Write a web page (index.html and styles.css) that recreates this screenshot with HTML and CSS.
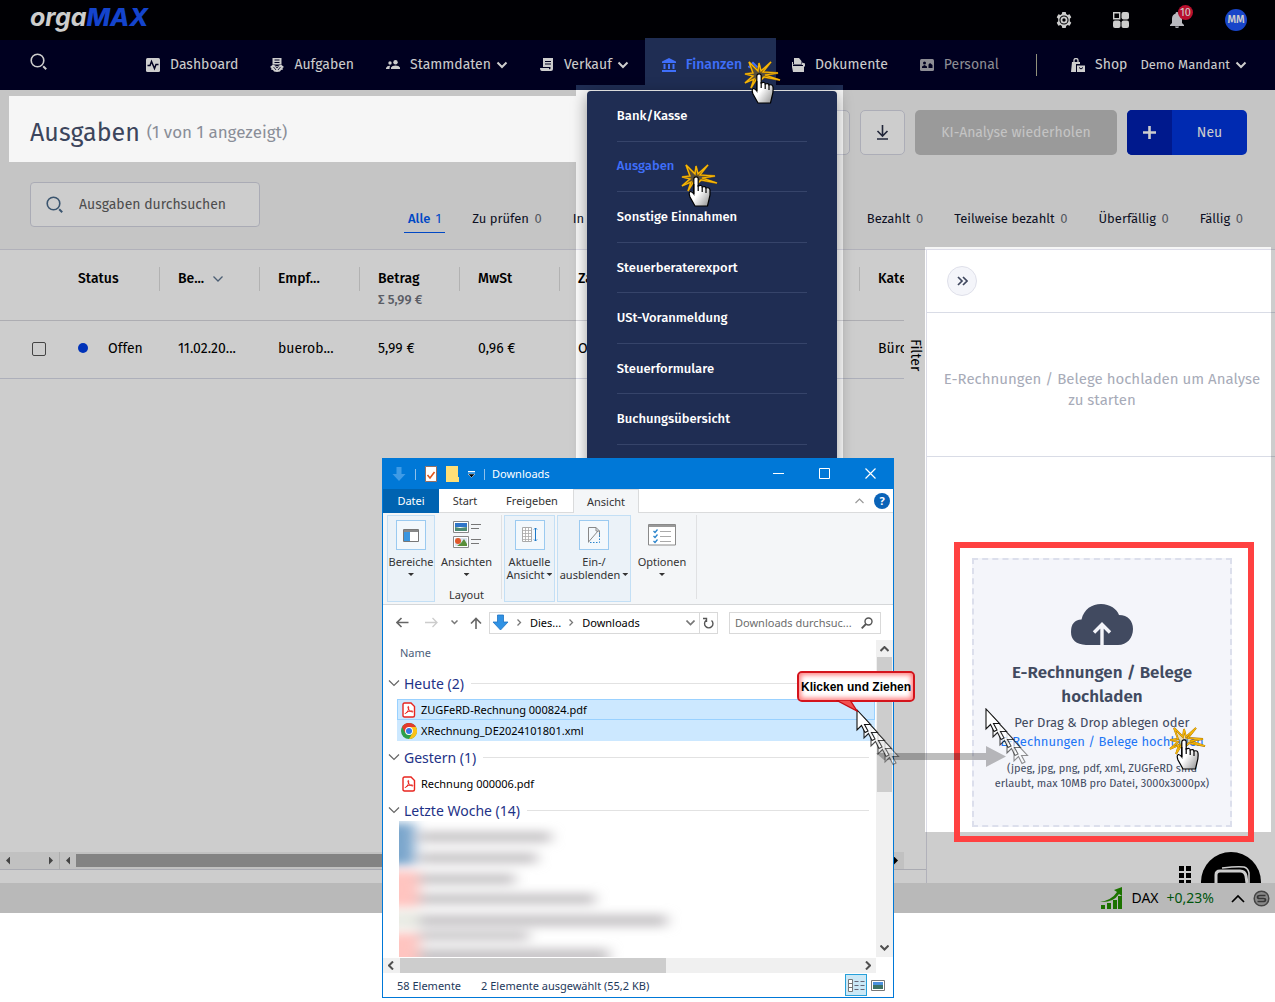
FILE: index.html
```html
<!DOCTYPE html>
<html lang="de">
<head>
<meta charset="utf-8">
<title>orgaMAX – Ausgaben</title>
<link rel="stylesheet" href="styles.css">
</head>
<body>
<svg class="defs" aria-hidden="true">
  <defs>
    <symbol id="chev" viewBox="0 0 12 8"><path d="M1.500 1.500 6 6l4.500-4.500" fill="none" stroke="currentColor" stroke-width="2"/></symbol>
    <symbol id="chev-thin" viewBox="0 0 12 8"><path d="M1 1.500 6 6.500l5-5" fill="none" stroke="currentColor" stroke-width="1.200"/></symbol>
    <symbol id="search" viewBox="0 0 18 18"><circle cx="7.500" cy="7.500" r="6.300" fill="none" stroke="currentColor" stroke-width="1.600"/><path d="m13.200 13.200 3 3" stroke="currentColor" stroke-width="2"/></symbol>
    <symbol id="pdf" viewBox="0 0 14 16"><path d="M2.500 1h6.500l3.500 3.500V13.500q0 1.500-1.500 1.500H2.500Q1 15 1 13.500v-11Q1 1 2.500 1z" fill="#fff" stroke="#e8251f" stroke-width="1.400"/><path d="M3.500 11.500C5.500 10.500 7 7.500 6.700 5c-.1-.9-1-.7-.8.3.4 2.200 2 4.300 4.500 4.700.9 0 .7-1.200-.6-1.100-2.300.1-4 .7-5.800 1.700-1 .7-.9 1.500-.5.9z" fill="none" stroke="#e8251f"/></symbol>
    <symbol id="dlarrow" viewBox="0 0 16 17"><path d="M5 1h6v7h4.500L8 16 .5 8H5z" fill="#3092e4" stroke="#1e74c4" stroke-width=".8"/></symbol>
    <symbol id="pointer" viewBox="0 0 16 25"><path d="M1 1v20l4.500-4.500 3.500 7 3-1.500-3.500-6.500h6z" fill="#fff" stroke="#111" stroke-width="1.100"/></symbol>
    <linearGradient id="skin" x2="1" y2="1"><stop offset=".5" stop-color="#fff"/><stop offset="1" stop-color="#8c8c8c"/></linearGradient>
    <symbol id="click" viewBox="-16 -16 40 48"><path d="M-10-12-1-3 0-11 2-3l10-9L4-2l15 1L6 1l15 5L5 3l-3 3-4-2-6 10 3-9-9 4 8-7-8-2 8-1z" fill="#d8a010" fill-opacity=".3" stroke="#a06c00" stroke-width="1.800"/><path d="M-10-12-1-3 0-11 2-3l10-9L4-2l15 1L6 1l15 5L5 3l-3 3-4-2-6 10 3-9-9 4 8-7-8-2 8-1z" fill="none" stroke="#f5b70a" stroke-width="1.200"/><path d="M-2.200 2a2.200 2.200 0 0 1 4.400 0v7q3.500-1.500 4 1 3-1.200 3.800 1 3.600-1 4 2 .5 5-1 9.500L11.500 29H-1L-6 20q-1.800-5 .5-5.500Q-3.500 15-2.200 17z" fill="url(#skin)" stroke="#000" stroke-width="1.200"/><path d="M-2.200 7v10M2.200 8v6M6.200 10v5M10 11v5" fill="none" stroke="#000" stroke-width="1.200"/></symbol>
  </defs>
</svg>

<div class="app">
  <header class="topbar">
    <a class="logo" href="#">orga<span>MAX</span></a>
    <div class="top-actions">
      <button class="icon-btn" aria-label="Einstellungen"><svg width="16" height="16" viewBox="0 0 16 16"><path fill="currentColor" fill-rule="evenodd" d="M6.300 0h3.400l.5 2.100 1.300.8 2.100-.7 1.700 3L13.800 6.700v2.600l1.500 1.500-1.700 3-2.100-.7-1.300.8-.5 2.100H6.300l-.5-2.100-1.300-.8-2.100.7-1.700-3 1.500-1.500V6.700L.7 5.200l1.700-3 2.100.7 1.300-.8zM8 3.400a4.600 4.600 0 1 0 0 9.200 4.600 4.600 0 0 0 0-9.200z"/><circle cx="8" cy="8" r="2.600" fill="none" stroke="currentColor" stroke-width="1.800"/></svg></button>
      <button class="icon-btn" aria-label="Apps"><svg width="16" height="16" viewBox="0 0 16 16" fill="currentColor"><path d="M.7.700h6v6h-6z" fill="none" stroke="currentColor" stroke-width="1.400"/><rect x="8.500" width="7.500" height="7.500" rx="2"/><rect y="8.500" width="7.500" height="7.500" rx="2"/><rect x="8.500" y="8.500" width="7.500" height="7.500" rx="2"/></svg></button>
      <button class="icon-btn bell" aria-label="Benachrichtigungen"><svg width="14" height="16" viewBox="0 0 14 16" fill="currentColor"><path d="M7 0a1.300 1.300 0 0 1 1.300 1.500C10.500 2 12 4 12 6.500V11l2 2v1H0v-1l2-2V6.500C2 4 3.500 2 5.700 1.500A1.300 1.300 0 0 1 7 0zM5 14.500h4a2 1.500 0 0 1-4 0z"/></svg><span class="badge">10</span></button>
      <button class="avatar">MM</button>
    </div>
  </header>

  <nav class="nav">
    <button class="icon-btn nav-search" aria-label="Suche"><svg width="18" height="18"><use href="#search"/></svg></button>
    <a class="nav-item" href="#"><svg width="14" height="14" viewBox="0 0 14 14"><rect width="14" height="14" rx="1.500" fill="currentColor"/><path d="M1.500 7.500H4L5.500 3.500l3 7L10 6.500h2.500" fill="none" stroke="#000028" stroke-width="1.500"/></svg>Dashboard</a>
    <a class="nav-item" href="#"><svg width="14" height="14" viewBox="0 0 14 14" fill="currentColor"><path d="M2.500 0h9v6.500h-9z"/><path d="M4.500 2h5M4.500 4.500h5" stroke="#000028" fill="none"/><path d="M0 9l3-2.500L7 8.500l4-2L14 9l-1.500 1 .5 1.500-2 .5-1 1.500L7 14l-3-.5L3 12l-2-.5.500-1.500z"/><path d="M3.500 9l2.500 3M10.500 9 8 12M5.500 8.500 7 10l1.500-1.500" stroke="#000028" stroke-width=".8" fill="none"/></svg>Aufgaben</a>
    <a class="nav-item" href="#"><svg width="14" height="10" viewBox="0 0 14 10" fill="currentColor"><circle cx="4" cy="3" r="1.700"/><circle cx="9.500" cy="2.300" r="2.200"/><path d="M0 9V8q1-2.500 4.200-2.300Q3.500 6.500 3.500 9zM5 9V7.500Q6 5.500 9.500 5.500T14 7.500V9z"/></svg>Stammdaten<svg width="12" height="8"><use href="#chev"/></svg></a>
    <a class="nav-item" href="#"><svg width="14" height="14" viewBox="0 0 14 14" fill="currentColor"><path d="M3 0h10v11q0 2-2 2H2Q0 13 0 10h9v1q1.500 1 1.500-1V9H3z"/><path d="M5 3.500h6M5 6h6" stroke="#000028"/></svg>Verkauf<svg width="12" height="8"><use href="#chev"/></svg></a>
    <div class="nav-group">
      <a class="nav-item active" href="#"><svg width="14" height="14" viewBox="0 0 14 14" fill="currentColor"><path d="M7 0l7 3.500V5H0V3.500zM1.500 6h2v5h-2zM6 6h2v5H6zM10.500 6h2v5h-2zM0 12h14v2H0z"/></svg>Finanzen<svg class="flip" width="12" height="8"><use href="#chev"/></svg></a>
      <div class="submenu-area">
        <div class="submenu">
          <ul>
            <li><a href="#">Bank/Kasse</a></li>
            <li><a class="current" href="#">Ausgaben</a></li>
            <li><a href="#">Sonstige Einnahmen</a></li>
            <li><a href="#">Steuerberaterexport</a></li>
            <li><a href="#">USt-Voranmeldung</a></li>
            <li><a href="#">Steuerformulare</a></li>
            <li><a href="#">Buchungsübersicht</a></li>
          </ul>
        </div>
      </div>
    </div>
    <a class="nav-item" href="#"><svg width="13" height="14" viewBox="0 0 13 14" fill="currentColor"><path d="M2 0h5l2.500 3v3H2zM0 4h1v2.500h9V4.500l3 1V8l-1 1v5H1L0 9z"/><path d="M1 7.500h10" stroke="#000028"/></svg>Dokumente</a>
    <a class="nav-item muted" href="#"><svg width="14" height="12" viewBox="0 0 14 12"><rect width="14" height="12" rx="1.500" fill="currentColor"/><path d="M2 9V7.500L4.500 6 7 7.500V9zM8.500 9V5.500L10 4l2.500 2V9z" fill="#000028"/><circle cx="4.500" cy="4" r="1.500" fill="#000028"/></svg>Personal</a>
    <span class="divider"></span>
    <a class="nav-item shop" href="#"><svg width="14" height="14" viewBox="0 0 14 14" fill="currentColor"><path d="M3 4V2.500q0-2 2-2t2 2V4" fill="none" stroke="currentColor" stroke-width="1.300"/><path d="M1 4h8v2H5v8H0zM6 7.500h8V14H6z"/><path d="M8 9.500q2 3 4 0" fill="none" stroke="#000028"/></svg>Shop</a>
    <button class="tenant">Demo Mandant<svg width="12" height="8"><use href="#chev"/></svg></button>
  </nav>

  <section class="page-head">
    <div class="title-row">
      <h1>Ausgaben</h1><span class="count">(1 von 1 angezeigt)</span>
      <div class="actions">
        <button class="square" aria-label="Ansicht"></button>
        <button class="square" aria-label="Herunterladen"><svg width="13" height="15" viewBox="0 0 13 15"><path d="M6.500 0v11M1.500 6l5 5 5-5M1 14h11" fill="none" stroke="#2a3048" stroke-width="1.600"/></svg></button>
        <button class="ki" disabled>KI-Analyse wiederholen</button>
        <button class="new"><span class="plus"><svg width="13" height="13" viewBox="0 0 13 13"><path d="M6.500 0v13M0 6.500h13" stroke="#fff" stroke-width="2.600"/></svg></span><span>Neu</span></button>
      </div>
    </div>
    <div class="filter-row">
      <label class="search"><svg width="18" height="18"><use href="#search"/></svg><input type="text" placeholder="Ausgaben durchsuchen" aria-label="Ausgaben durchsuchen"></label>
      <div class="tabs">
        <a class="on" href="#">Alle <span>1</span></a>
        <a href="#">Zu prüfen <span>0</span></a>
        <a class="fill" href="#">In</a>
        <a href="#">Bezahlt <span>0</span></a>
        <a href="#">Teilweise bezahlt <span>0</span></a>
        <a href="#">Überfällig <span>0</span></a>
        <a href="#">Fällig <span>0</span></a>
      </div>
    </div>
  </section>

  <main class="main">
    <div class="left">
      <div class="table-area">
        <div class="table-clip">
          <table>
            <colgroup><col class="c-check"><col><col><col><col><col><col><col><col><col></colgroup>
            <thead><tr>
              <th class="no-sep"></th><th>Status</th>
              <th>Be...<svg class="sort" width="12" height="8" viewBox="0 0 12 8"><path d="M1.500 1.500 6 6l4.500-4.500" fill="none" stroke="#5e7590" stroke-width="1.300"/></svg></th>
              <th>Empf...</th><th>Betrag<small>Σ 5,99 €</small></th><th>MwSt</th><th>Zahl...</th><th></th><th></th><th>Kategorie</th>
            </tr></thead>
            <tbody><tr>
              <td class="check"><input type="checkbox" aria-label="Zeile auswählen"></td>
              <td><span class="dot"></span>Offen</td><td>11.02.20...</td><td>buerob...</td><td>5,99 €</td><td>0,96 €</td><td>Offen</td><td></td><td></td><td>Büro</td>
            </tr></tbody>
          </table>
        </div>
        <button class="filter-tab">Filter</button>
      </div>
      <div class="scrollers">
        <div class="sc sc-a"><i class="l"></i><i class="r"></i></div>
        <div class="sc sc-b"><i class="l"></i><b></b><i class="r dark"></i></div>
      </div>
    </div>

    <aside class="panel">
      <div class="panel-head"><button class="collapse" aria-label="Einklappen"><svg width="11" height="10" viewBox="0 0 11 10"><path d="m1 1 4 4-4 4M6 1l4 4-4 4" fill="none" stroke="#3f475e" stroke-width="1.700"/></svg></button></div>
      <p class="panel-note">E-Rechnungen / Belege hochladen um Analyse zu starten</p>
      <div class="drop">
        <svg width="62" height="42" viewBox="0 0 62 42"><path d="M15 41Q0 40 0 28 0 16 10.500 15.500C13 5 21 0 30 0c9 0 16 5 18 11 9 0 14 6 14 14 0 9-6 16-15 16z" fill="#414a60"/><path d="M31 41V21M23 28.500l8-8 8 8" fill="none" stroke="#f4f5fa" stroke-width="3.400"/></svg>
        <h2>E-Rechnungen / Belege hochladen</h2>
        <p class="hint">Per Drag &amp; Drop ablegen oder<br><a href="#">E-Rechnungen / Belege hochladen</a></p>
        <p class="types">(jpeg, jpg, png, pdf, xml, ZUGFeRD sind erlaubt, max 10MB pro Datei, 3000x3000px)</p>
        <span class="frame"></span>
      </div>
      <div class="chat">
        <svg width="84" height="31" viewBox="0 0 84 31"><g fill="#000"><path d="M1 14h5v5H1zM8 14h5v5H8zM1 21h5v5H1zM8 21h5v5H8zM1 28h5v3H1zM8 28h5v3H8z"/><circle cx="53" cy="30" r="30"/></g><path d="M38 31v-8q0-4 4-4h20q5 0 6 5l1 7" fill="none" stroke="#fff" stroke-width="3"/><path d="M44 16q16-2 22-1 4 1 5 6v10" fill="none" stroke="#fff" stroke-width="1.500"/></svg>
      </div>
    </aside>
  </main>

  <footer class="taskbar">
    <svg width="23" height="22" viewBox="0 0 23 22" fill="#249000"><path d="M1 18h4v4H1zM7 16h4v6H7zM13 13h4v9h-4zM18 9h4v13h-4z"/><path d="M0 15Q12 13 17 5l-3-2 8-3v9l-3-2Q13 16 0 15z"/></svg>
    <span>DAX</span><span class="up">+0,23%</span>
    <svg class="tray" width="14" height="9" viewBox="0 0 14 9"><path d="m1 8 6-6 6 6" fill="none" stroke="#000" stroke-width="1.700"/></svg>
    <svg width="17" height="17" viewBox="0 0 17 17"><circle cx="8.500" cy="8.500" r="7.300" fill="#aaa" stroke="#555" stroke-width="1.500"/><path d="M12.500 5.500H7q-2.500 0-2.500 1.500t2 1.500h4q2 0 2 1.500T10 11.500H4.500" fill="none" stroke="#444" stroke-width="1.700"/></svg>
  </footer>
  <div class="dim"></div>
</div>

<section class="window" aria-label="Downloads">
  <div class="w-title">
    <svg width="14" height="16" viewBox="0 0 14 16"><path d="M4.500 1h5v7h4L7 15 .5 8h4z" fill="#3f9be6"/></svg><span class="pipe"></span>
    <svg width="12" height="16" viewBox="0 0 12 16"><path d="M.5.500h11v15H.5z" fill="#fff" stroke="#9a7060"/><path d="m2.500 9 2.500 3L9.500 6" fill="none" stroke="#e0541a" stroke-width="1.600"/></svg>
    <svg width="13" height="16" viewBox="0 0 13 16"><path d="M0 0h12v11h1v5H0z" fill="#ffdf76"/></svg>
    <svg class="qa" width="7" height="7" viewBox="0 0 7 7"><path d="M0 0h7v1.300H0z" fill="#fff"/><path d="M0 3h7L3.500 6.500z" fill="#000" stroke="#fff" stroke-width=".5"/></svg><span class="pipe"></span>
    <span class="w-name">Downloads</span>
    <button aria-label="Minimieren"><svg width="11" height="11" viewBox="0 0 11 11"><path d="M0 5.500h11" stroke="#fff"/></svg></button>
    <button aria-label="Maximieren"><svg width="11" height="11" viewBox="0 0 11 11"><path d="M.5.500h10v10H.5z" fill="none" stroke="#fff"/></svg></button>
    <button aria-label="Schließen"><svg width="11" height="11" viewBox="0 0 11 11"><path d="m.5.500 10 10m0-10-10 10" stroke="#fff" stroke-width="1.200"/></svg></button>
  </div>
  <div class="w-tabs">
    <button class="file-tab">Datei</button><button>Start</button><button class="wide">Freigeben</button><button class="sel">Ansicht</button>
    <svg class="up-arrow" width="9" height="6" viewBox="0 0 9 6"><path d="m.5 5 4-4 4 4" fill="none" stroke="#999" stroke-width="1.200"/></svg>
    <span class="help">?</span>
  </div>
  <div class="ribbon">
    <button class="rb lit r1"><span class="ic"><svg width="16" height="13" viewBox="0 0 16 13"><path d="M.5.500h15v12H.5z" fill="#fff" stroke="#777"/><path d="M1 1h14v2H1z" fill="#888"/><path d="M1 3h6v9H1z" fill="#3a96e0"/></svg></span>Bereiche<i></i></button>
    <div class="r2"><button class="rb"><span class="ic plain"><svg width="28" height="28" viewBox="0 0 28 28"><path d="M.5.500h15v11H.5zM.5 15.500h15v11H.5z" fill="#fff" stroke="#888"/><path d="M2 2h12v4H2z" fill="#2f75c8"/><path d="M2 6l5 1 7-1v4H2z" fill="#4f8a72"/><path d="M2 17h12v8H2z" fill="#dbe3f0"/><circle cx="5" cy="20" r="3" fill="#e0592a"/><path d="m8 22 3-4 3 5v2H4z" fill="#5a8f3a"/><path d="M18 3.500h10M18 7.500h8M18 18.500h10M18 22.500h8" stroke="#777"/></svg></span>Ansichten<i></i></button><span class="cap">Layout</span></div>
    <span class="rsep"></span>
    <button class="rb lit r3"><span class="ic"><svg width="16" height="16" viewBox="0 0 16 16"><path d="M.5.500h9v14h-9z" fill="#fff" stroke="#aaa"/><path d="M1 3.500h8M1 6.500h8M1 9.500h8M1 12.500h8M3.500 1v13M6.500 1v13" stroke="#aaa" stroke-width=".8"/><path d="M13.500 1v13M12 2.500 13.500 1 15 2.500M12 12.500l1.500 1.500 1.500-1.500" fill="none" stroke="#1b78c8"/></svg></span>Aktuelle<span class="ln">Ansicht<i></i></span></button>
    <button class="rb lit r4"><span class="ic"><svg width="12" height="16" viewBox="0 0 12 16"><path d="M.5.500H8L11.500 4v6" fill="none" stroke="#888"/><path d="M.5 15.500V.5M.5 15 10 4M8 .5V4h3.500" fill="none" stroke="#888"/><path d="M2 15.500h9.500V6" fill="none" stroke="#2a84cc" stroke-dasharray="1.500 1.500"/></svg></span>Ein-/<span class="ln">ausblenden<i></i></span></button>
    <button class="rb r5"><span class="ic plain"><svg width="28" height="22" viewBox="0 0 28 22"><path d="M.5.500h27v20.500H.5z" fill="#fff" stroke="#8a8a8a"/><path d="M1 1h26v2H1z" fill="#999"/><path d="M12 7.500h11M12 12.500h11M12 17.500h11" stroke="#aaa"/><path d="m5.500 7 1.500 1.500L9.500 5.500m-4 6.500L7 13.500l2.500-3m-4 6.500L7 18.500l2.500-3" fill="none" stroke="#2a84cc" stroke-width="1.300"/></svg></span>Optionen<i></i></button>
    <span class="rsep"></span>
  </div>
  <div class="address">
    <svg width="13" height="11" viewBox="0 0 13 11"><path d="M12.500 5.500H1M5.500 1 1 5.500 5.500 10" fill="none" stroke="#666" stroke-width="1.600"/></svg>
    <svg width="13" height="11" viewBox="0 0 13 11"><path d="M0 5.500h11.500M7.500 1 12 5.500 7.500 10" fill="none" stroke="#ccc" stroke-width="1.300"/></svg>
    <svg width="7" height="5" viewBox="0 0 7 5"><path d="m.5.500 3 3 3-3" fill="none" stroke="#777" stroke-width="1.500"/></svg>
    <svg width="12" height="12" viewBox="0 0 12 12"><path d="M6 12V1.500M1 6.500l5-5 5 5" fill="none" stroke="#666" stroke-width="1.600"/></svg>
    <div class="path"><svg width="17" height="17"><use href="#dlarrow"/></svg><svg width="5" height="7" viewBox="0 0 5 7"><path d="m.5.500 3 3-3 3" fill="none" stroke="#777" stroke-width="1.300"/></svg><span>Dies...</span><svg width="5" height="7" viewBox="0 0 5 7"><path d="m.5.500 3 3-3 3" fill="none" stroke="#777" stroke-width="1.300"/></svg><span>Downloads</span><svg class="pd" width="9" height="6" viewBox="0 0 9 6"><path d="m.5.500 4 4 4-4" fill="none" stroke="#777" stroke-width="1.600"/></svg><button aria-label="Aktualisieren"><svg width="11" height="12" viewBox="0 0 11 12"><path d="M8.500 3.500A4.200 4.200 0 1 1 3 3.500M0 1.500h3.500V5" fill="none" stroke="#555" stroke-width="1.400"/></svg></button></div>
    <label class="w-search"><input type="text" placeholder="Downloads durchsuc..." aria-label="Downloads durchsuchen"><svg width="12" height="12" viewBox="0 0 12 12"><circle cx="7.500" cy="4.500" r="3.500" fill="none" stroke="#555" stroke-width="1.400"/><path d="M5 7 .7 11.300" stroke="#555" stroke-width="1.800"/></svg></label>
  </div>
  <div class="w-body">
    <div class="list">
      <div class="col-name">Name</div>
      <div class="group"><svg width="12" height="8"><use href="#chev-thin"/></svg>Heute (2)</div>
      <div class="file sel focus"><svg width="14" height="16"><use href="#pdf"/></svg>ZUGFeRD-Rechnung 000824.pdf</div>
      <div class="file sel"><svg width="16" height="16" viewBox="0 0 16 16"><circle cx="8" cy="8" r="8" fill="#2da04a"/><path d="M1 4a8 8 0 0 1 14 0z" fill="#e33b2e"/><path d="M1 4 4.500 10 8 8 8 4z" fill="#e33b2e"/><path d="M15 4H8l3.500 6L8 16A8 8 0 0 0 15 4z" fill="#fbc116"/><circle cx="8" cy="8" r="3.900" fill="#fff"/><circle cx="8" cy="8" r="3" fill="#3377e8"/></svg>XRechnung_DE2024101801.xml</div>
      <div class="group"><svg width="12" height="8"><use href="#chev-thin"/></svg>Gestern (1)</div>
      <div class="file"><svg width="14" height="16"><use href="#pdf"/></svg>Rechnung 000006.pdf</div>
      <div class="group"><svg width="12" height="8"><use href="#chev-thin"/></svg>Letzte Woche (14)</div>
      <div class="blurred"><svg width="478" height="136" viewBox="0 0 478 136"><defs><filter id="soft" x="-20%" y="-20%" width="140%" height="140%"><feGaussianBlur stdDeviation="7 5"/></filter></defs><g filter="url(#soft)"><path d="M-14 2h30v42h-30z" fill="#7aa6cc"/><path d="M-14 50h34v36h-34zM-14 112h34v34h-34z" fill="#ffc4c0"/><path d="M-14 90h34v18h-34z" fill="#e9ebe4"/><path d="M20 10h132v12H20zM20 31h118v12H20zM20 52h96v12H20zM20 72h176v12H20zM20 93h248v13H20zM20 110h110v10H20zM20 127h190v20H20z" fill="#cac8ca"/></g></svg></div>
    </div>
    <div class="vscroll"><svg width="9" height="6" viewBox="0 0 9 6"><path d="m.5 5 4-4 4 4" fill="none" stroke="#505050" stroke-width="2"/></svg><b></b><svg width="9" height="6" viewBox="0 0 9 6"><path d="m.5.500 4 4 4-4" fill="none" stroke="#505050" stroke-width="2"/></svg></div>
  </div>
  <div class="hscroll"><svg width="6" height="9" viewBox="0 0 6 9"><path d="m5 .5-4 4 4 4" fill="none" stroke="#505050" stroke-width="2"/></svg><b></b><svg width="6" height="9" viewBox="0 0 6 9"><path d="m1 .5 4 4-4 4" fill="none" stroke="#505050" stroke-width="2"/></svg></div>
  <div class="status"><span>58 Elemente</span><span>2 Elemente ausgewählt (55,2 KB)</span>
    <button class="view on" aria-label="Details"><svg width="17" height="13" viewBox="0 0 17 13"><path d="M.5.500h4v12h-4zM.5 4.500h4M.5 8.500h4" fill="#fff" stroke="#777"/><path d="M6.500 2.500h4M12.500 2.500h4M6.500 6.500h4M12.500 6.500h4M6.500 10.500h4M12.500 10.500h4" stroke="#667"/></svg></button>
    <button class="view" aria-label="Symbole"><svg width="14" height="11" viewBox="0 0 14 11"><path d="M.5.500h13v10H.5z" fill="#fff" stroke="#777"/><path d="M2 2h10v3H2z" fill="#4a90dd"/><path d="M2 5h10v4H2z" fill="#3d7265"/></svg></button>
  </div>
</section>

<div class="notes" aria-hidden="true">
  <svg class="n-arrow" width="130" height="22" viewBox="0 0 130 22"><path d="M0 7h110V0l20 10.500-20 10.500v-7H8z" fill="#000" fill-opacity=".26"/></svg>
  <svg class="trail from" width="46" height="60"><use href="#pointer" x="28" y="32" width="16" height="25" opacity=".45"/><use href="#pointer" x="21" y="24" width="16" height="25" opacity=".6"/><use href="#pointer" x="14" y="16" width="16" height="25" opacity=".75"/><use href="#pointer" x="7" y="8" width="16" height="25" opacity=".9"/><use href="#pointer" width="16" height="25"/></svg>
  <svg class="trail to" width="46" height="60"><use href="#pointer" x="28" y="32" width="16" height="25" opacity=".45"/><use href="#pointer" x="21" y="24" width="16" height="25" opacity=".6"/><use href="#pointer" x="14" y="16" width="16" height="25" opacity=".75"/><use href="#pointer" x="7" y="8" width="16" height="25" opacity=".9"/><use href="#pointer" width="16" height="25"/></svg>
  <div class="callout">Klicken und Ziehen<svg width="22" height="12" viewBox="0 0 22 12"><path d="M0 0 21 11 14 0z" fill="#f25050" stroke="#c80c14" stroke-width="1.300"/></svg></div>
  <svg class="click c1" width="40" height="48"><use href="#click"/></svg>
  <svg class="click c2" width="40" height="48"><use href="#click"/></svg>
  <svg class="click c3" width="40" height="48"><use href="#click"/></svg>
</div>
</body>
</html>
```

FILE: styles.css
```css
* { box-sizing: border-box; }
body { margin: 0; min-height: 100vh; position: relative; background: #fff; color: #000; font: 14px/20px "Fira Sans", "Noto Sans", sans-serif; }
button, input { font: inherit; color: inherit; }
button { border: 0; padding: 0; background: none; display: flex; align-items: center; justify-content: center; }
a { color: inherit; text-decoration: none; }
h1, h2, p, ul { margin: 0; padding: 0; font-weight: 400; }
svg { display: block; flex: none; }
.defs { position: absolute; width: 0; height: 0; }

/* application */
.app { position: relative; overflow: hidden; }
.dim {
  position: absolute; inset: 0; z-index: 2; pointer-events: none; background: rgba(0, 0, 0, .196);
  clip-path: polygon(evenodd, 0 0, 100% 0, 100% 100%, 0 100%, 0 0,
    9px 96px, 576px 96px, 576px 162px, 9px 162px, 9px 96px, 0 0,
    576px 85px, 843px 85px, 843px 490px, 576px 490px, 576px 85px, 0 0,
    calc(100% - 350px) 247px, calc(100% - 4px) 247px, calc(100% - 4px) 832px, calc(100% - 350px) 832px, calc(100% - 350px) 247px, 0 0);
}

.topbar { height: 40px; padding: 0 28px 0 30px; display: flex; justify-content: space-between; background: #000006; color: #fff; }
.logo { font: italic 700 25px/34px Inter, sans-serif; }
.logo span { color: #1955ff; font-weight: 800; }
.top-actions { display: flex; align-items: center; gap: 41px; }
.icon-btn { color: #fff; }
.bell { position: relative; color: #e6e6ee; }
.badge { position: absolute; left: 8px; top: -7px; width: 15px; height: 15px; border-radius: 50%; background: #e6143a; color: #fff; font-size: 11px; line-height: 15px; }
.avatar { width: 22px; height: 22px; border-radius: 50%; background: #1e56fa; color: #fff; font-size: 11px; font-weight: 500; }

.nav { height: 50px; padding: 0 28px 0 30px; display: flex; align-items: center; background: #000028; color: #fff; }
.nav-search { margin: 0 82px 6px 0; }
.nav-item { height: 50px; padding: 0 16px; display: flex; align-items: center; gap: 10px; white-space: nowrap; }
.nav-item svg + svg, .nav-item svg:last-child:not(:first-child) { margin-left: -5px; }
.nav-item.muted { color: #b0b0b8; }
.nav-group { position: relative; z-index: 3; }
.nav-item.active { height: 52px; margin-top: -2px; padding: 2px 17px 0; background: #1f2d53; color: #3f6ffa; font-weight: 500; }
.flip { transform: rotate(180deg); }
.divider { width: 1px; height: 22px; margin: 0 18px 0 auto; background: #b5b59a; }
.nav-item.shop { padding-right: 13px; }
.tenant { gap: 5px; font-size: 13px; white-space: nowrap; color: #fff; }

.submenu-area { position: absolute; left: -69px; top: 45px; width: 267px; padding: 1px 6px 0 11px; border-top: 5px solid #1f2d53; }
.submenu { padding: 0 30px 30px; border-radius: 4px; background: #1f2d53; box-shadow: 0 4px 16px rgba(0, 0, 0, .4); }
.submenu ul { height: 354px; display: flex; flex-direction: column; list-style: none; }
.submenu li { flex: 1; display: flex; align-items: center; border-bottom: 1px solid #36446a; font-size: 13px; font-weight: 500; color: #fff; }
.submenu .current { color: #3f6ffa; }

.page-head { padding: 20px 28px 16px 30px; background: #f6f6f6; border-bottom: 1px solid #dcdce8; }
.title-row { height: 45px; display: flex; align-items: center; }
h1 { font-size: 25px; line-height: 30px; color: #3c455c; }
.count { margin-left: 7px; font-size: 17px; color: #8a8e98; }
.actions { margin-left: auto; display: flex; gap: 10px; }
.actions button { height: 45px; border-radius: 5px; }
.square { width: 45px; background: #fff; border: 1px solid #d6d7e4; }
.ki { width: 202px; background: #c0c0c0; color: #f4f4f4; }
.actions .new { width: 120px; overflow: hidden; background: #0035dc; color: #fff; }
.new span { flex: 1; }
.new .plus { flex: 0 0 45px; height: 45px; display: grid; place-items: center; background: #0020b0; }
.filter-row { margin-top: 27px; display: flex; }
.search { flex: none; width: 230px; height: 45px; padding: 0 15px; display: flex; align-items: center; gap: 15px; border: 1px solid #d4d5e2; border-radius: 4px; background: #fff; color: #4a6a8a; }
.search input, .w-search input { min-width: 0; flex: 1; border: 0; padding: 0; background: none; outline: 0; }
.search input::placeholder { color: #606060; opacity: 1; }
.tabs { flex: 1; margin-left: 144px; padding-top: 23px; display: flex; gap: 23px; font-size: 13px; line-height: 27px; white-space: nowrap; color: #10142c; }
.tabs a { height: 28px; padding: 0 4px; }
.tabs span { margin-left: 2px; color: #6a6e78; }
.tabs .fill { flex: 1 1 0; }
.tabs .on, .tabs .on span { color: #005af6; }
.tabs .on { font-weight: 500; border-bottom: 1px solid #005af6; }
.tabs .on span { font-weight: 400; }

.main { display: flex; background: #fff; }
.left { flex: 1; min-width: 0; display: flex; flex-direction: column; padding-bottom: 13px; }
.table-area { flex: 1; display: flex; }
.table-clip { flex: 1; min-width: 0; overflow: hidden; }
table { width: 960px; table-layout: fixed; border-collapse: collapse; }
col { width: 100px; }
.c-check { width: 60px; }
th, td { padding: 0 0 0 18px; text-align: left; white-space: nowrap; }
th { height: 70px; padding-top: 19px; vertical-align: top; font-weight: 500; border-bottom: 1px solid #d8d8de; background: linear-gradient(#dedede, #dedede) 100% 17px / 1px 24px no-repeat; }
th.no-sep { background: none; }
td { height: 58px; border-bottom: 1px solid #d8dae8; }
th small { display: block; font-size: 13px; line-height: 22px; font-weight: 500; color: #71747e; }
.sort { display: inline-block; margin-left: 8px; }
td.check { padding-left: 32px; }
.check input { appearance: none; display: block; width: 14px; height: 14px; margin: 0; border: 1px solid #555; border-radius: 2px; }
.dot { display: inline-block; width: 10px; height: 10px; margin-right: 20px; border-radius: 50%; background: #003fe6; }
.filter-tab { width: 22px; height: 50px; margin-top: 80px; writing-mode: vertical-rl; }

.scrollers { height: 18px; display: flex; border-bottom: 1px solid #d4d5de; }
.sc { height: 17px; display: flex; align-items: center; background: #f0f0f0; }
.sc i { width: 16px; height: 8px; flex: none; background: #555; clip-path: polygon(6px 50%, 10px 0, 10px 100%); }
.sc i.r { clip-path: polygon(10px 50%, 6px 0, 6px 100%); }
.sc i.dark { background: #000; }
.sc-a { width: 60px; justify-content: space-between; border-right: 1px solid #d8d8d8; }
.sc-b { flex: 1; margin-right: 22px; }
.sc b { flex: 1; height: 13px; margin-right: 12px; background: #a3a3a3; }

.panel { position: relative; width: 349px; flex: none; border-left: 1px solid #dcdde8; }
.panel-head { height: 63px; padding: 16px 20px; border-bottom: 1px solid #d9dce6; }
.collapse { width: 30px; height: 30px; border: 1px solid #dfe0ea; border-radius: 50%; background: #f4f5fa; }
.panel-note { height: 144px; padding: 56px 13px 0 15px; border-bottom: 1px solid #d9dce6; font-size: 15px; line-height: 21px; text-align: center; color: #a7abb8; }
.drop { position: relative; width: 260px; height: 269px; margin: 101px 43px 56px auto; padding: 44px 16px 0; border: 2px dashed #dcdfec; background: #f4f5fa; text-align: center; color: #414a60; }
.drop svg { margin: 0 auto 15px; }
.drop h2 { font-size: 17px; line-height: 24px; font-weight: 600; padding: 0 10px; }
.hint { margin-top: 4px; font-size: 13px; line-height: 19px; white-space: nowrap; }
.hint a { color: #1f75f5; }
.types { margin-top: 10px; font-size: 11px; line-height: 15px; }
.frame { position: absolute; inset: -18px -24px -17px -20px; z-index: 4; border: 6px solid #ff4141; }
.chat { position: absolute; right: 13px; bottom: 0; }
.taskbar { height: 30px; padding: 0 5px; display: flex; align-items: center; justify-content: flex-end; gap: 8px; background: #e7e7e7; font-family: "Segoe UI", "Noto Sans", sans-serif; }
.taskbar .up { color: #006a10; }
.taskbar .tray { margin-left: 9px; }

/* file manager window */
.window { position: absolute; left: 382px; top: 458px; z-index: 5; width: 512px; border: 1px solid #0078d7; background: #fff; font: 11px/13px "Segoe UI", "Noto Sans", sans-serif; }
.w-title { height: 30px; padding-left: 9px; display: flex; align-items: center; gap: 9px; background: #0078d7; color: #fff; }
.w-title .pipe { width: 1px; height: 11px; background: #8fc0ea; }
.w-name { margin: 0 auto 2px -2px; }
.w-title button { width: 37px; height: 30px; margin-bottom: 2px; }
.w-title button:last-child { margin-right: 4px; }
.w-tabs { height: 24px; display: flex; align-items: center; border-bottom: 1px solid #dadbdc; color: #333; }
.w-tabs button { width: 52px; height: 24px; }
.w-tabs .file-tab { width: 56px; background: #0063b1; color: #fff; }
.w-tabs .wide { width: 82px; }
.w-tabs .sel { width: 66px; border: 1px solid #dadbdc; border-bottom: 0; background: #f4f6f8; }
.w-tabs .up-arrow { margin-left: auto; }
.help { width: 16px; height: 16px; margin: 0 3px 0 10px; border-radius: 50%; background: #0a63b8; color: #fff; font-weight: 700; line-height: 16px; text-align: center; }
.ribbon { height: 92px; padding: 2px 4px; display: flex; background: #f4f6f8; border-bottom: 1px solid #d5d7d9; color: #333; }
.rb { height: 87px; flex-direction: column; justify-content: flex-start; padding-top: 4px; width: 48px; border: 1px solid transparent; white-space: nowrap; }
.rb.lit { border-color: #c3dff5; background: #ebf2f8; }
.rb .ic { width: 30px; height: 30px; margin-bottom: 5px; display: grid; place-items: center; border: 1px solid #9bcaf0; background: #f3f8fc; }
.rb .ic.plain { border-color: transparent; background: none; }
.rb i { width: 6px; height: 3px; margin-top: 5px; background: #333; clip-path: polygon(0 0, 100% 0, 50% 100%); }
.ln { display: flex; gap: 2px; }
.r2 { width: 63px; display: flex; flex-direction: column; align-items: center; }
.r2 .rb { width: 63px; height: 73px; }
.rsep { width: 1px; height: 84px; margin: 0 2px 0 3px; background: #e0e1e3; }
.rb.r3 { width: 51px; }
.rb.r4 { width: 74px; margin-left: 2px; }
.rb.r5 { width: 62px; }
.address { height: 35px; padding: 0 12px 0 13px; display: flex; align-items: center; gap: 16px; }
.address > svg:nth-child(3) { margin: 0 -4px 0 -3px; }
.path { flex: none; width: 229px; height: 22px; margin-left: -9px; padding-left: 2px; display: flex; align-items: center; gap: 8px; border: 1px solid #d9d9d9; }
.path .pd { margin-left: auto; }
.path button { width: 18px; height: 20px; margin-left: -4px; border-left: 1px solid #d9d9d9; }
.w-search { flex: 1; min-width: 0; height: 22px; margin-left: -5px; padding: 0 7px 0 5px; display: flex; align-items: center; border: 1px solid #d9d9d9; color: #6d6d6d; }
.w-search input::placeholder { color: #6d6d6d; opacity: 1; }
.w-body { display: flex; }
.list { flex: 1; min-width: 0; }
.col-name { height: 27px; padding: 6px 17px; color: #4c607a; }
.group { height: 32px; padding: 0 7px 0 5px; display: flex; align-items: center; gap: 4px; font-size: 14px; color: #1e3287; }
.group svg { color: #666; }
.group::after { content: ""; flex: 1; height: 1px; margin-left: 3px; background: #e2e2e2; }
.file { height: 21px; margin: 0 1px 0 14px; padding-left: 3px; display: flex; align-items: center; border: 1px solid transparent; }
.file svg { width: 16px; margin-right: 4px; }
.file.sel { background: #cce8ff; border-color: #cce8ff; }
.file.focus { border-color: #99d1ff; }
.blurred { height: 136px; margin: -5px 0 0 16px; overflow: hidden; }
.vscroll { width: 17px; padding: 6px 0; display: flex; flex-direction: column; align-items: center; justify-content: space-between; background: #f0f0f0; }
.vscroll b { width: 15px; height: 135px; margin: 5px 0 auto; background: #cdcdcd; }
.hscroll { height: 16px; margin-right: 17px; padding: 0 5px; display: flex; align-items: center; background: #f0f0f0; border-top: 1px solid #fff; }
.hscroll b { width: 266px; height: 15px; margin: 0 auto 0 6px; background: #cdcdcd; }
.status { height: 24px; padding-left: 14px; display: flex; align-items: center; color: #1e395b; }
.status span { margin-right: 20px; }
.status .view { width: 22px; height: 22px; }
.status .on { margin-left: auto; border: 1px solid #26a0da; background: #cbe8f6; }
.status .view:last-child { margin-right: 4px; }

/* annotations over the screens */
.notes > * { position: absolute; z-index: 6; }
.n-arrow { left: 876px; top: 746px; }
.from { left: 856px; top: 709px; }
.to { left: 985px; top: 708px; }
.callout { left: 797px; top: 671px; width: 118px; height: 31px; border: 2px solid #d4141c; border-radius: 5px; background: #fff; box-shadow: inset 0 0 5px 2px #ff8080; display: flex; justify-content: center; font: 700 12px/29px "Liberation Sans", Arial, sans-serif; white-space: nowrap; }
.callout svg { position: absolute; left: 37px; top: 27px; }
.c1 { left: 743px; top: 58px; }
.c2 { left: 680px; top: 161px; }
.c3 { left: 1168px; top: 724px; }
```
